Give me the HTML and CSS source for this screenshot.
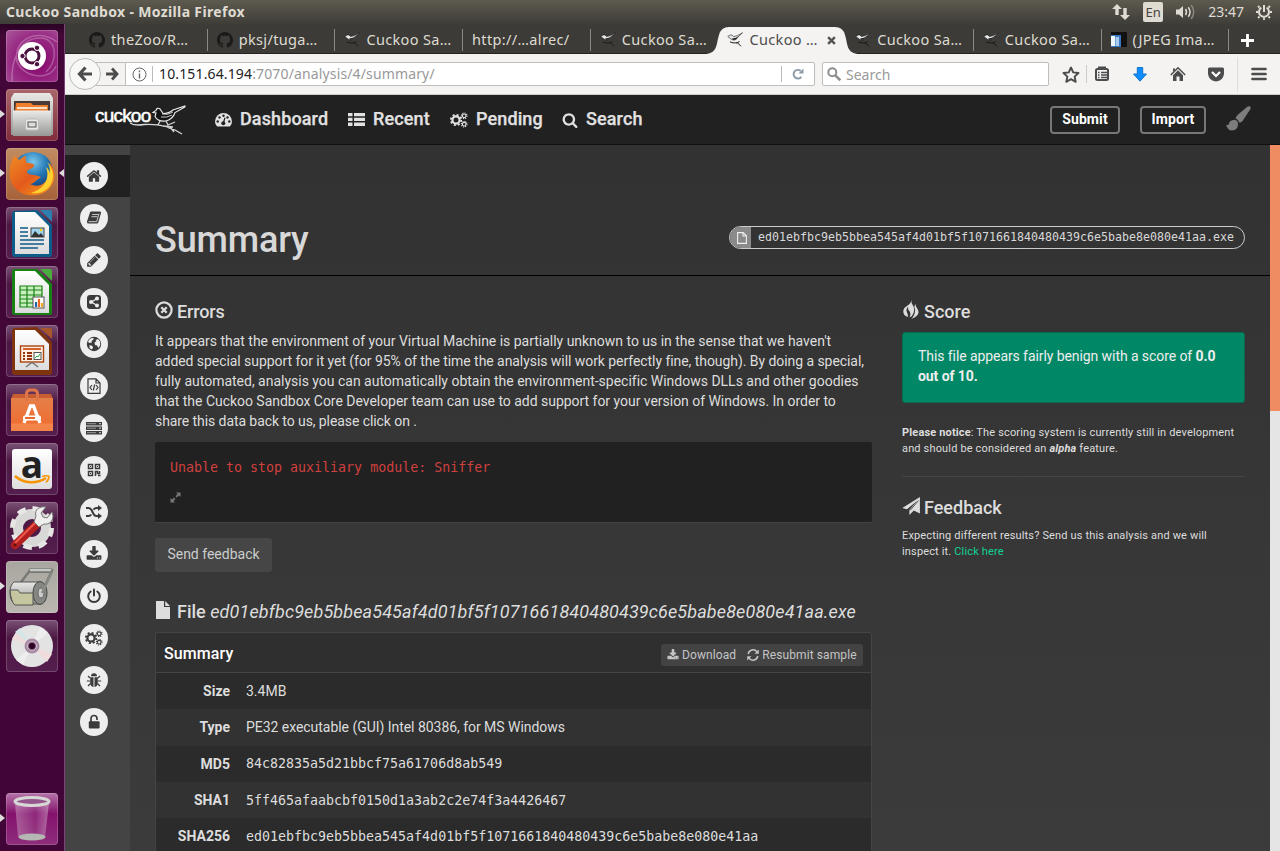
FILE: index.html
```html
<!DOCTYPE html>
<html lang="en">
<head>
<meta charset="utf-8">
<title>Cuckoo Sandbox - Mozilla Firefox</title>
<link rel="stylesheet" href="styles.css">
</head>
<body>
<svg class="defs" width="0" height="0">
  <defs>
    <linearGradient id="silver" x1="0" y1="0" x2="0" y2="1"><stop offset="0" stop-color="#e8e8e6"/><stop offset="1" stop-color="#979795"/></linearGradient>
    <linearGradient id="paper" x1="0" y1="0" x2="0" y2="1"><stop offset="0" stop-color="#fff"/><stop offset="1" stop-color="#dcdcdc"/></linearGradient>
    <linearGradient id="bag" x1="0" y1="0" x2="0" y2="1"><stop offset="0" stop-color="#e57f49"/><stop offset=".75" stop-color="#ee6f33"/><stop offset=".8" stop-color="#f5844b"/><stop offset="1" stop-color="#f08347"/></linearGradient>
    <linearGradient id="fox" x1="0" y1="0" x2="1" y2="1"><stop offset="0" stop-color="#f08a24"/><stop offset=".5" stop-color="#e35a1c"/><stop offset="1" stop-color="#f9a51e"/></linearGradient>
    <radialGradient id="globeblue" cx=".5" cy=".25" r=".7"><stop offset="0" stop-color="#7cc6ea"/><stop offset=".5" stop-color="#2478b5"/><stop offset="1" stop-color="#173a74"/></radialGradient>
    <linearGradient id="bin" x1="0" y1="0" x2="1" y2="0"><stop offset="0" stop-color="#fff" stop-opacity=".3"/><stop offset=".6" stop-color="#fff" stop-opacity=".08"/><stop offset="1" stop-color="#fff" stop-opacity=".35"/></linearGradient>
  </defs>
  <symbol id="i-home" viewBox="0 0 1792 1792"><path d="M1472 992v480q0 26-19 45t-45 19h-384v-384h-256v384h-384q-26 0-45-19t-19-45v-480q0-1 .5-3t.5-3l575-474 575 474q1 2 1 6zm223-69l-62 74q-8 9-21 11h-3q-13 0-21-7l-692-577-692 577q-12 8-24 7-13-2-21-11l-62-74q-8-10-7-23.5t11-21.5l719-599q32-26 76-26t76 26l244 204v-195q0-14 9-23t23-9h192q14 0 23 9t9 23v408l219 182q10 8 11 21.5t-7 23.5z"/></symbol>
  <symbol id="i-pencil" viewBox="0 0 1792 1792"><path d="M491 1536l91-91-235-235-91 91v107h128v128h107zm523-928q0-22-22-22-10 0-17 7l-542 542q-7 7-7 17 0 22 22 22 10 0 17-7l542-542q7-7 7-17zm-54-192l416 416-832 832h-416v-416zm683 96q0 53-37 90l-166 166-416-416 166-165q36-38 90-38 53 0 91 38l235 234q37 39 37 91z"/></symbol>
  <symbol id="i-download" viewBox="0 0 1792 1792"><path d="M1344 1344q0-26-19-45t-45-19-45 19-19 45 19 45 45 19 45-19 19-45zm256 0q0-26-19-45t-45-19-45 19-19 45 19 45 45 19 45-19 19-45zm128-224v320q0 40-28 68t-68 28h-1472q-40 0-68-28t-28-68v-320q0-40 28-68t68-28h465l135 136q58 56 136 56t136-56l136-136h464q40 0 68 28t28 68zm-325-569q17 41-14 70l-448 448q-18 19-45 19t-45-19l-448-448q-31-29-14-70 17-39 59-39h256v-448q0-26 19-45t45-19h256q26 0 45 19t19 45v448h256q42 0 59 39z"/></symbol>
  <symbol id="i-search" viewBox="0 0 1792 1792"><path d="M1216 832q0-185-131.5-316.5t-316.5-131.5-316.5 131.5-131.5 316.5 131.5 316.5 316.5 131.5 316.5-131.5 131.5-316.5zm512 832q0 52-38 90t-90 38q-54 0-90-38l-343-342q-179 124-399 124-143 0-273.5-55.5t-225-150-150-225-55.5-273.5 55.5-273.5 150-225 225-150 273.5-55.5 273.5 55.5 225 150 150 225 55.5 273.5q0 220-124 399l343 343q37 37 37 90z"/></symbol>
  <symbol id="i-plane" viewBox="0 0 18 18"><path d="M17.900 0V16.500L11.800 13.500 7.400 18V13L15.500 3.500 5 12.200.3 11z"/><path d="M8.300 13.300L16.500 3.500" stroke="#363636" stroke-width=".8"/></symbol>
  <symbol id="i-github" viewBox="0 0 16 16"><path d="M8 0C3.58 0 0 3.58 0 8c0 3.54 2.29 6.53 5.47 7.59.4.07.55-.17.55-.38 0-.19-.01-.82-.01-1.49-2.01.37-2.53-.49-2.69-.94-.09-.23-.48-.94-.82-1.13-.28-.15-.68-.52-.01-.53.63-.01 1.08.58 1.23.82.72 1.21 1.87.87 2.33.66.07-.52.28-.87.51-1.07-1.78-.2-3.64-.89-3.64-3.95 0-.87.31-1.59.82-2.15-.08-.2-.36-1.02.08-2.12 0 0 .67-.21 2.2.82.64-.18 1.32-.27 2-.27s1.36.09 2 .27c1.53-1.04 2.2-.82 2.2-.82.44 1.1.16 1.92.08 2.12.51.56.82 1.27.82 2.15 0 3.07-1.87 3.75-3.65 3.95.29.25.54.73.54 1.48 0 1.07-.01 1.93-.01 2.2 0 .21.15.46.55.38A8.01 8.01 0 0016 8c0-4.42-3.58-8-8-8z"/></symbol>
  <symbol id="i-cogs" viewBox="0 0 18 16">
    <g fill="none" stroke="currentColor"><circle cx="6" cy="8" r="3.6" stroke-width="2.2"/><circle cx="6" cy="8" r="5.2" stroke-width="1.8" stroke-dasharray="2.04"/>
    <circle cx="14.2" cy="3.800" r="1.800" stroke-width="1.100"/><circle cx="14.2" cy="3.800" r="2.800" stroke-width="1.100" stroke-dasharray="1.100"/>
    <circle cx="14.2" cy="12.200" r="1.800" stroke-width="1.100"/><circle cx="14.2" cy="12.200" r="2.800" stroke-width="1.100" stroke-dasharray="1.100"/></g></symbol>
  <symbol id="i-bird" viewBox="0 0 16 16"><path d="M.8 4.500L3.200 3 5 3l1.500 1.600 4-1L15.500.8 11 5C9.500 8 6.500 9 4 7z" fill="#e8e8e8" stroke="#1a1a1a" stroke-width=".6"/><path d="M5 6.500L9 5.700 11.500 4 9 7.400 6 8z" fill="#222"/><path d="M3 9.800c3 1.600 5 1 7.500 1l3.500 3.500M9.500 11l3-1.500" fill="none" stroke="#191919" stroke-width="1"/></symbol>
</svg>

<div class="desktop">
  <header class="menubar">
    <span class="win-title">Cuckoo Sandbox - Mozilla Firefox</span>
    <div class="indicators">
      <svg width="18" height="16" viewBox="0 0 18 16" fill="#dfdbd2"><path d="M5 0l5 5H6.700v6H3.300V5H0zM13 16l5-5h-3.300V4h-3.400v7H8z"/></svg>
      <span class="lang">En</span>
      <svg width="20" height="16" viewBox="0 0 20 16"><path d="M0 5.500h3L7 2v12L3 10.500H0z" fill="#dfdbd2"/><path d="M9.500 5q2 3 0 6M12.300 3.200q3.500 4.800 0 9.600" stroke="#dfdbd2" stroke-width="1.500" fill="none"/><path d="M15.200 1q5 7 0 14" stroke="#8b877e" stroke-width="1.500" fill="none"/></svg>
      <span class="clock">23:47</span>
      <svg width="16" height="16" viewBox="0 0 16 16" fill="none" stroke="#dfdbd2"><path d="M5.300 3.600a5 5 0 1 0 5.400 0" stroke-width="2"/><path d="M8 1v7" stroke-width="2"/><path d="M3.500 3.500L2 2m10.500 1.500L14 2M2.500 8H0m13.500 0H16M3.500 12.500L2 14m10.500-1.500L14 14M8 13.500V16" stroke-width="1.800"/></svg>
    </div>
  </header>

  <div class="workspace">
    <aside class="launcher">
      <div class="app ubuntu"><svg viewBox="0 0 52 52"><path d="M6 51C5 30 14 8 34 8c18 0 18 24 6 34M51 12C30-4 4 12 12 34M50 36C44 52 14 48 10 28" fill="none" stroke="#fff" stroke-opacity=".25" stroke-width="1.500"/><circle cx="26" cy="26" r="14" fill="#fff"/><circle cx="26" cy="26" r="7" fill="none" stroke="#4b1240" stroke-width="3"/><g fill="#4b1240" stroke="#fff"><circle cx="16.500" cy="26" r="2.700"/><circle cx="31" cy="17.800" r="2.700"/><circle cx="31" cy="34.200" r="2.700"/></g></svg></div>
      <div class="app files run"><svg viewBox="0 0 52 52"><path d="M8 4h36l3 5v37H5V9z" fill="url(#silver)"/><path d="M5 9h42v3H5z" fill="#dededc"/><path d="M8 12h36v11H8z" fill="#4a3a35"/><path d="M10 14h15l2 2h15v7H9z" fill="#f07f2e"/><path d="M11 18h30v2H11z" fill="#fbe1c9"/><path d="M7 22h38v25H7z" fill="url(#silver)"/><path d="M7 22h38" stroke="#eee"/><rect x="19.500" y="30" width="13" height="11" rx="2" fill="#e9e9e7" stroke="#bbb"/><rect x="22" y="33" width="8" height="5" fill="#ddd" stroke="#555"/></svg></div>
      <div class="app firefox run focus"><svg viewBox="0 0 52 52"><circle cx="27" cy="24" r="20" fill="url(#globeblue)"/><path d="M8 8c2 1 4 2 5 4 3-2 5-4 7-4-1 3 0 5 1 7 4 0 8 1 7 3-1 3-7 3-7 6 0 2 4 3 8 3l6 2c-4 2-7 7-11 7 6 3 12 2 16-3 5-5 6-13 3-19 6 6 8 17 2 24-7 12-28 12-36 2C1 31 3 18 8 8z" fill="url(#fox)"/><path d="M41 14c8 7 8 19 1 26-6 5-12 6-17 5 11-3 20-13 15-26 3 2 4 5 3 8 2-6 0-10-2-13z" fill="#fdd130"/></svg></div>
      <div class="app doc"><svg viewBox="0 0 52 52"><path d="M9 4q-3 0-3 3v40q0 3 3 3h35q2 0 2-2V18L31 3z" fill="#0e5c8a"/><path d="M34 3h10q2 0 2 2v10z" fill="#2f7fae"/><path d="M9 5h20l14 14v28H9z" fill="url(#paper)"/><path d="M14 21h8m-8 4h8m-8 4h8m-8 4h24m-24 4h24m-24 4h18" stroke="#0e5c8a" stroke-width="1.700"/><rect x="25" y="21" width="13" height="9" fill="#9fd4ee" stroke="#444"/><path d="M25 30l4-6 4 4 2-2 3 4z" fill="#333"/><circle cx="35" cy="23" r="1.300" fill="#fc0"/></svg></div>
      <div class="app doc"><svg viewBox="0 0 52 52"><path d="M9 3q-3 0-3 3v40q0 3 3 3h35q2 0 2-2V18L31 3z" fill="#188114"/><path d="M34 3h10q2 0 2 2v10z" fill="#4bab3c"/><path d="M9 5h20l14 14v28H9z" fill="url(#paper)"/><rect x="14" y="20" width="22" height="21" fill="#c7f0be"/><path d="M14 20h22v21H14zM14 24h22m-22 5h22m-22 4h22m-22 4h22M21 20v21m7-21v21" fill="none" stroke="#188114" stroke-width="1.200"/><rect x="27" y="31" width="11" height="11" fill="#fff" stroke="#555"/><path d="M30 41v-5" stroke="#26a" stroke-width="2.200"/><path d="M33 41v-8" stroke="#e62" stroke-width="2.200"/><path d="M36 41v-4" stroke="#ea2" stroke-width="2.200"/></svg></div>
      <div class="app doc"><svg viewBox="0 0 52 52"><path d="M9 3q-3 0-3 3v41q0 3 3 3h35q2 0 2-2V17L31 2z" fill="#7e340f"/><path d="M34 3h10q2 0 2 2v9z" fill="#a8572c"/><path d="M9 5h20l14 14v26H9z" fill="url(#paper)"/><rect x="14.500" y="21" width="23" height="16" fill="#fff0e2" stroke="#a8430b" stroke-width="1.400"/><path d="M17 24h18" stroke="#d8602a" stroke-width="2"/><path d="M17 28h2m-2 3h2m-2 3h2m2-6h5m-5 3h5m-5 3h5" stroke="#92330a" stroke-width="1.800"/><rect x="28" y="27.500" width="7" height="7" fill="#fff" stroke="#555"/><path d="M29 33l2-2 1 1 2-3" stroke="#2a3" fill="none"/><path d="M20 42l5-4h2l5 4" fill="none" stroke="#777" stroke-width="1.500"/></svg></div>
      <div class="app"><svg viewBox="0 0 52 52"><path d="M5 15l2-5h38l2 5v8H5z" fill="#c75e31"/><path d="M5 14h42v33H5z" fill="url(#bag)"/><path d="M20.500 17V10q0-4 4-4h3q4 0 4 4v7" fill="none" stroke="#df7449" stroke-width="3"/><path d="M18 39l6.500-17h3L34 39" fill="none" stroke="#fff" stroke-width="3.400"/><rect x="17" y="31.500" width="18" height="5" rx="2" fill="#fff"/><path d="M19 34h10" stroke="#e96a2d" stroke-width="2"/></svg></div>
      <div class="app amazon"><div class="amz"><span>a</span><svg viewBox="0 0 40 40"><path d="M3 27c9 8 22 8 31 2" fill="none" stroke="#f79400" stroke-width="2.400"/><path d="M30 27.500c3-1 7-1 7 0s-1 4-3 6" fill="none" stroke="#f79400" stroke-width="1.700"/></svg></div></div>
      <div class="app"><svg viewBox="0 0 52 52"><circle cx="26" cy="26" r="14" fill="none" stroke="#d8d8d6" stroke-width="10"/><circle cx="26" cy="26" r="19.500" fill="none" stroke="#e6e6e4" stroke-width="5" stroke-dasharray="8.500 6.800"/><path d="M9 43L31 22" stroke="#b31e1e" stroke-width="8" stroke-linecap="round"/><path d="M9 41L30 20" stroke="#ec5a4b" stroke-width="2"/><path d="M28 20l5 5 5-3c5 1 9-3 9-8l-1-4-5 6-4-1-2-4 5-6c-7-1-12 3-10 9z" fill="#efefed" stroke="#777"/><circle cx="9" cy="43" r="1.600" fill="#611"/></svg></div>
      <div class="app scanner run"><svg viewBox="0 0 52 52"><path d="M15 21L24 9.500H46L36 31" fill="none" stroke="#777974" stroke-width="2.400"/><path d="M25 9.500h19" stroke="#777974" stroke-width="5" stroke-linecap="round"/><path d="M25 9h19" stroke="#c5c7c2" stroke-width="2.500" stroke-linecap="round"/><path d="M8 21h27v22H9q-5-3-5-11t4-11z" fill="url(#silver)" stroke="#555"/><ellipse cx="34" cy="32" rx="7" ry="11.500" fill="#858783" stroke="#444"/><ellipse cx="35" cy="32" rx="3" ry="5" fill="#ccc" stroke="#666"/><path d="M4 29l8 0 2 3h13v12H9q-4-3-5-15z" fill="#c5c6a0" stroke="#555"/><path d="M36 32l10-21" stroke="#888a85" stroke-width="2.400"/></svg></div>
      <div class="app"><svg viewBox="0 0 52 52"><circle cx="26" cy="26" r="21" fill="#e3e3e3"/><path d="M26 26L6 19l5-8zM26 26l20 8-5 8z" fill="#f0dcdc"/><path d="M26 26l-9 19-7-5zM26 26l8-19 8 6z" fill="#eee"/><path d="M26 26L9 12l5-4z" fill="#d5e6e6"/><circle cx="26" cy="26" r="7.500" fill="#a98ba6"/><circle cx="26" cy="26" r="4.500" fill="#7c4a75" stroke="#ccc"/><circle cx="26" cy="26" r="3" fill="#2c0322"/></svg></div>
      <div class="app trash run"><svg viewBox="0 0 52 52"><path d="M9 10h34l-4 34q-13 5-27 0z" fill="url(#bin)"/><ellipse cx="26" cy="44" rx="13.500" ry="3.500" fill="#b5b8b2"/><ellipse cx="26" cy="8.500" rx="17" ry="4" fill="#94568b" stroke="#d7d8d5" stroke-width="3"/></svg></div>
    </aside>

    <section class="browser">
      <nav class="tabs">
        <div class="tab"><svg class="fav gh"><use href="#i-github"/></svg><span>theZoo/R…</span></div>
        <div class="tab"><svg class="fav gh"><use href="#i-github"/></svg><span>pksj/tuga…</span></div>
        <div class="tab"><svg class="fav"><use href="#i-bird"/></svg><span>Cuckoo Sa…</span></div>
        <div class="tab"><span>http://…alrec/</span></div>
        <div class="tab last"><svg class="fav"><use href="#i-bird"/></svg><span>Cuckoo Sa…</span></div>
        <div class="tab active"><svg class="tab-shape" viewBox="0 0 156 28"><path d="M0 28C14 28 12 18 15 9Q17 1 25 1H131Q139 1 141 9C144 18 142 28 156 28z" fill="#f4f3f2"/></svg><svg class="fav"><use href="#i-bird"/></svg><span>Cuckoo …</span><svg class="x" viewBox="0 0 8 8"><path d="M1 1l6 6M7 1L1 7" stroke="#555" stroke-width="2.200"/></svg></div>
        <div class="tab"><svg class="fav"><use href="#i-bird"/></svg><span>Cuckoo Sa…</span></div>
        <div class="tab"><svg class="fav"><use href="#i-bird"/></svg><span>Cuckoo Sa…</span></div>
        <div class="tab"><svg class="fav" viewBox="0 0 16 16"><path d="M0 0h16v15H0z" fill="#111"/><path d="M0 3h10v12H0z" fill="#3b78c4"/><path d="M0 4h4v10H0z" fill="#eef6fd"/><path d="M4.500 5H8v9H4.500z" fill="#a9cbee"/></svg><span>(JPEG Ima…</span></div>
        <svg class="plus" viewBox="0 0 12 12"><path d="M6 0v12M0 6h12" stroke="#fff" stroke-width="2.600"/></svg>
      </nav>

      <div class="toolbar">
        <button class="back"><svg width="16" height="16" viewBox="0 0 16 16" fill="none" stroke="#4c4c4c" stroke-width="3.200"><path d="M8.500 1.500L2.500 8l6 6.500M3 8h12"/></svg></button>
        <div class="urlbar">
          <span class="fwd"><svg width="13" height="14" viewBox="0 0 13 14" fill="none" stroke="#4c4c4c" stroke-width="2.800"><path d="M6 1.500L11 7l-5 5.500M11 7H0"/></svg></span>
          <svg class="info" width="15" height="15" viewBox="0 0 15 15"><circle cx="7.500" cy="7.500" r="6.500" fill="none" stroke="#666"/><path d="M7.500 6.500v5M7.500 3.500v1.700" stroke="#666" stroke-width="1.400"/></svg>
          <span class="url"><b>10.151.64.194</b>:7070/analysis/4/summary/</span>
          <span class="reload"><svg width="12" height="12" viewBox="0 0 12 12"><path d="M9.300 8.800A4.300 4.300 0 1 1 8.800 3" fill="none" stroke="#8b9aa8" stroke-width="1.900"/><path d="M6.500 5.500H11.500V.5z" fill="#8b9aa8"/></svg></span>
        </div>
        <div class="searchbar"><svg width="14" height="14" viewBox="0 0 14 14" fill="none" stroke="#8e8e8e"><circle cx="5.300" cy="5.300" r="4" stroke-width="2"/><path d="M8.300 8.300l5 5" stroke-width="2.600"/></svg><span>Search</span></div>
        <div class="tools">
          <svg width="18" height="17" viewBox="0 0 18 17"><path d="M9 1.500l2.200 4.900 5.300.6-3.900 3.600 1.100 5.200L9 13.200l-4.700 2.600 1.100-5.200L1.500 7l5.300-.6z" fill="none" stroke="#4c4c4c" stroke-width="1.900" stroke-linejoin="round"/></svg>
          <i class="sep"></i>
          <svg width="14" height="16" viewBox="0 0 14 16"><rect x="1" y="3" width="12" height="11" rx="1.500" fill="none" stroke="#4c4c4c" stroke-width="2"/><path d="M4 3V1.500h6V3" fill="none" stroke="#4c4c4c" stroke-width="2"/><path d="M3 6.500h1.500M6 6.500h6M3 9h1.500M6 9h6M3 11.500h1.500M6 11.500h6" stroke="#4c4c4c" stroke-width="1.500"/></svg>
          <svg width="14" height="15" viewBox="0 0 14 15"><path d="M4.300.5h5.400V7H13.500L7 14.200.5 7H4.300z" fill="#0f8dff" stroke="#1174cf"/></svg>
          <svg width="16" height="16" viewBox="0 0 16 16"><path d="M.8 9L8 1.800 15.200 9" fill="none" stroke="#4c4c4c" stroke-width="1.500"/><path d="M3 9.300l5-5 5 5V15H9.500v-4.500h-3V15H3z" fill="#4c4c4c"/><path d="M3 2.500h2V4L3 6z" fill="#4c4c4c"/></svg>
          <svg width="16" height="15" viewBox="0 0 16 15"><path d="M1.500.5h13q1.500 0 1.500 1.500v5q-1 7-8 7.500Q1 14 0 7V2Q0 .5 1.500.5z" fill="#4c4c4c"/><path d="M4 5l4 4 4-4" fill="none" stroke="#fff" stroke-width="2.200"/></svg>
          <i class="sep tall"></i>
          <svg width="16" height="14" viewBox="0 0 16 14"><path d="M1.500 2h13M1.500 7h13M1.500 12h13" stroke="#4c4c4c" stroke-width="2.700" stroke-linecap="round"/></svg>
        </div>
      </div>

      <header class="site-head">
        <div class="logo"><span>cuckoo</span><svg viewBox="0 0 56 30"><path d="M23 7.500L26 5.500Q27 2 30 4L33 8.500Q39 8.500 43 5L55 1Q55.500 2 53 3L45 7.500Q43 14 36 16 28 17 25 11.500L26 8z" fill="#141414" stroke="#eee" stroke-width="1.100"/><path d="M32 9q6 1.500 11-2M31 12q6 1 11-2" fill="none" stroke="#ddd" stroke-width=".9"/><path d="M0 18q5 3 14 1.500 13-.5 19 1.500l10 1M36 22l9 3 7 4M30 16l-2 4M36 16l2 4 7-3M40 22l4 5" fill="none" stroke="#d6d6d6" stroke-width="1.300"/></svg></div>
        <a class="n1"><svg width="17" height="14" viewBox="0 0 17 14"><path d="M1.800 13Q0 11 0 8.500a8.500 8.500 0 0 1 17 0Q17 11 15.200 13q-.5.500-1 .5H2.800q-.5 0-1-.5z" fill="currentColor"/><g fill="#222"><circle cx="2.700" cy="8.500" r="1.200"/><circle cx="4.500" cy="4.400" r="1.200"/><circle cx="8.500" cy="2.700" r="1.200"/><circle cx="12.500" cy="4.400" r="1.200"/><circle cx="14.300" cy="8.500" r="1.200"/><circle cx="8.300" cy="10.300" r="2"/></g><path d="M8.300 10.300L10 4.800" stroke="#222" stroke-width="1.200"/></svg><span>Dashboard</span></a>
        <a class="n2"><svg width="17" height="13" viewBox="0 0 17 13" fill="currentColor"><path d="M0 0h4.500v3.300H0zM6 0h11v3.300H6zM0 4.800h4.500v3.300H0zM6 4.800h11v3.300H6zM0 9.600h4.500V13H0zM6 9.600h11V13H6z"/></svg><span>Recent</span></a>
        <a class="n3"><svg width="18" height="16"><use href="#i-cogs"/></svg><span>Pending</span></a>
        <a class="n4"><svg width="16" height="16" fill="currentColor"><use href="#i-search"/></svg><span>Search</span></a>
        <div class="actions"><button class="submit">Submit</button><button class="import">Import</button><svg width="25" height="25" viewBox="0 0 25 25" fill="#7d7d7d"><path d="M23.800.3q1.500 1 .5 3L16.500 15Q15 17 13 16.500 12 13 9.500 12.500 10 10.500 11.500 9L21.300.8q1.300-1 2.500-.5zM8.500 13.800q3.500.5 3.500 4.200 0 6-6 6.500-4.500 0-6-6 1.500 1 2.500.2 1-4.700 6-4.900z"/></svg></div>
      </header>

      <div class="site-body">
        <nav class="side">
          <a class="on"><i><svg fill="currentColor"><use href="#i-home"/></svg></i></a>
          <a><i><svg viewBox="0 0 16 16"><path d="M5 1.500h9q1.500 0 1 1.500l-2.700 9.500q-.3 1-1.300 1H2.500q-1.500 0-1.500-1.500 0-1 .4-1.800L4 2.500q.3-1 1-1z" fill="currentColor"/><path d="M6.200 4.500H12M5.500 6.700h5.800M2.500 11.700h8.200L13 3.500" stroke="#eee" stroke-width=".8" fill="none"/></svg></i></a>
          <a><i><svg fill="currentColor"><use href="#i-pencil"/></svg></i></a>
          <a><i><svg viewBox="0 0 16 16"><rect x="1" y="1" width="14" height="14" rx="3" fill="currentColor"/><path d="M11 4.500L5.500 8l5.500 3.500" stroke="#eee" fill="none" stroke-width="1.300"/><g fill="#eee"><circle cx="11" cy="4.500" r="2"/><circle cx="5" cy="8" r="2"/><circle cx="11" cy="11.500" r="2"/></g></svg></i></a>
          <a><i><svg viewBox="0 0 16 16"><circle cx="8" cy="8" r="7.200" fill="currentColor"/><path d="M5 2.200L8 2 7 4 5.500 5 6 6.500 3.500 7 2 6Q2.500 3.500 5 2.200zM9.500 4l2.500-1 2 2.500.3 3.500L12.500 12 11 9.500 9 9 8.500 6.500 10.500 5zM3.500 9l3 1 .5 2-1.500 1.500L3.500 12z" fill="#eee"/></svg></i></a>
          <a><i><svg viewBox="0 0 16 16" fill="none" stroke="currentColor" stroke-width="1.200"><path d="M2 .8h8L14 5v10.300H2zM10 .8V5h4M6 7l-2 2.500L6 12M10 7l2 2.500-2 2.500M8.700 6.500l-1.400 6"/></svg></i></a>
          <a><i><svg viewBox="0 0 16 16" fill="currentColor"><path d="M0 2h16v3.500H0zM0 6.500h16V10H0zM0 11h16v3.500H0z"/><path d="M1 3.700h9M1 8.200h9M1 12.700h9" stroke="#999"/><path d="M13 3.700h2M13 8.200h2M13 12.700h2" stroke="#ddd"/></svg></i></a>
          <a><i><svg viewBox="0 0 16 16" fill="none" stroke="currentColor" stroke-width="1.500"><path d="M2.500 2.500h4v4h-4zM9.500 2.500h4v4h-4zM2.500 9.500h4v4h-4zM9.500 14V9.500h2v2h2V9M12 13.500h2.500"/><path d="M4 4.500h1M11 4.500h1M4 11.500h1" stroke-width="1"/></svg></i></a>
          <a><i><svg viewBox="0 0 16 16"><path d="M0 4h2.500q2 0 3.300 2.500L7.500 10q1 2 3 2H13M0 12h2.500q1.700 0 2.700-1.500M7.500 5.800Q8.700 4 10.500 4H13" fill="none" stroke="currentColor" stroke-width="2"/><path d="M12 1l4 3-4 3zM12 9l4 3-4 3z" fill="currentColor"/></svg></i></a>
          <a><i><svg fill="currentColor"><use href="#i-download"/></svg></i></a>
          <a><i><svg viewBox="0 0 16 16" fill="none" stroke="currentColor" stroke-width="2" stroke-linecap="round"><path d="M4.700 3.500a5.800 5.800 0 1 0 6.600 0M8 1.500v6"/></svg></i></a>
          <a><i><svg class="wide"><use href="#i-cogs"/></svg></i></a>
          <a><i><svg viewBox="0 0 16 16"><path d="M5 4.200a3 3 0 0 1 6 0zM4.200 5.200h3.300V15Q4.200 14.500 4.200 11zM8.500 5.200h3.300V11q0 3.500-3.300 4z" fill="currentColor"/><path d="M4 6L2 4M12 6l2-2M4 9H.8M12 9h3.200M4.500 11.500L2 14M11.500 11.500L14 14" stroke="currentColor" stroke-width="1.200"/></svg></i></a>
          <a><i><svg viewBox="0 0 16 16"><rect x="2.800" y="7.300" width="10.800" height="7.200" rx="1" fill="currentColor"/><path d="M5 8V4.500a3 3 0 0 1 6 0V6" fill="none" stroke="currentColor" stroke-width="1.700"/></svg></i></a>
        </nav>

        <main class="main">
          <div class="page-head"><h1>Summary</h1>
            <div class="pill"><span class="pill-ic"><svg width="10" height="12" viewBox="0 0 10 12" fill="none" stroke="#eee" stroke-width="1.100"><path d="M.6.600h5.600l3.200 3.200v7.600H.600zM6 .6V4h3.400"/></svg></span><code>ed01ebfbc9eb5bbea545af4d01bf5f1071661840480439c6e5babe8e080e41aa.exe</code></div>
          </div>
          <div class="cols">
            <section class="left">
              <h2><svg width="18" height="18" viewBox="0 0 18 18" fill="none" stroke="currentColor"><circle cx="9" cy="9" r="7.600" stroke-width="2.200"/><path d="M6.300 6.300l5.400 5.400M11.700 6.300l-5.400 5.400" stroke-width="2.300"/></svg><span class="errors">Errors</span></h2>
              <p class="intro"><span class="l1">It appears that the environment of your Virtual Machine is partially unknown to us in the sense that we haven't</span><br><span class="l2">added special support for it yet (for 95% of the time the analysis will work perfectly fine, though). By doing a special,</span><br><span class="l3">fully automated, analysis you can automatically obtain the environment-specific Windows DLLs and other goodies</span><br><span class="l4">that the Cuckoo Sandbox Core Developer team can use to add support for your version of Windows. In order to</span><br><span class="l5">share this data back to us, please click on .</span></p>
              <div class="err"><code>Unable to stop auxiliary module: Sniffer</code><svg width="11" height="11" viewBox="0 0 12 12" fill="#777"><path d="M6.500.5h5v5L9.800 3.800 7.500 6 6 4.500 8.200 2.200zM5.500 11.500h-5v-5l1.700 1.700L4.500 6 6 7.500 3.800 9.800z"/></svg></div>
              <button class="send">Send feedback</button>
              <h2 class="file"><svg width="16" height="18" viewBox="0 0 16 18" fill="currentColor"><path d="M1 0h8v6h6v12H1zM10.200 0L15 5h-4.800z"/></svg><span>File <em>ed01ebfbc9eb5bbea545af4d01bf5f1071661840480439c6e5babe8e080e41aa.exe</em></span></h2>
              <div class="panel">
                <div class="panel-head"><b>Summary</b><div class="btns"><a><svg width="12" height="12" fill="currentColor"><use href="#i-download"/></svg>Download</a><a><svg width="12" height="12" viewBox="0 0 12 12"><path d="M1.200 5A5 5 0 0 1 10 2.700M10.800 7A5 5 0 0 1 2 9.300" fill="none" stroke="currentColor" stroke-width="1.500"/><path d="M11.800.5v4.300H7.500zM.2 11.500V7.200h4.300z" fill="currentColor"/></svg>Resubmit sample</a></div></div>
                <div class="row"><b>Size</b><span>3.4MB</span></div>
                <div class="row"><b>Type</b><span class="type">PE32 executable (GUI) Intel 80386, for MS Windows</span></div>
                <div class="row"><b>MD5</b><code>84c82835a5d21bbcf75a61706d8ab549</code></div>
                <div class="row"><b>SHA1</b><code>5ff465afaabcbf0150d1a3ab2c2e74f3a4426467</code></div>
                <div class="row"><b>SHA256</b><code>ed01ebfbc9eb5bbea545af4d01bf5f1071661840480439c6e5babe8e080e41aa</code></div>
              </div>
            </section>
            <aside class="right">
              <h2><svg class="flame" width="17" height="19" viewBox="0 0 17 19" fill="currentColor"><path d="M8.300 0Q8 3 10 5.500 12 9 10.500 13 9.500 16.500 6.500 17.500 8.500 13.500 6 10.500 4.500 8.500 5.200 6.500 2.500 9.500 4 12.500 5.300 15 4.800 17 0 15.500 .3 10.500 1 7.500 4.500 5.500 8 3.500 8.300 0z"/><path d="M12.300 3.800Q12.300 6.500 14.500 9 17 13 13.500 16 11.500 18 8.300 18.800 10.500 17 11.600 13.800 13 10 11.300 6.800 11.800 5.500 12.300 3.800z"/></svg><span>Score</span></h2>
              <div class="score"><span>This file appears fairly benign with a score of <b>0.0</b></span><br><b>out of 10.</b></div>
              <p class="small"><b>Please notice</b>: The scoring system is currently still in development<br>and should be considered an <b><em>alpha</em></b> feature.</p>
              <hr>
              <h2 class="fb"><svg width="18" height="18" fill="currentColor"><use href="#i-plane"/></svg><span>Feedback</span></h2>
              <p class="small">Expecting different results? Send us this analysis and we will<br>inspect it. <a>Click here</a></p>
            </aside>
          </div>
        </main>
        <div class="scroll"><div class="thumb"></div></div>
      </div>
    </section>
  </div>
</div>
</body>
</html>
```
FILE: styles.css
```css
* { box-sizing: border-box; }
body { margin: 0; overflow: hidden; font-family: Roboto, sans-serif; color: #ddd; }
svg { display: block; flex: none; }
.defs { position: absolute; }
button { font-family: inherit; padding: 0; }
.desktop { width: 1280px; height: 851px; display: flex; flex-direction: column; overflow: hidden; }

.menubar { height: 24px; flex: none; display: flex; justify-content: space-between; align-items: center; padding: 0 8px 0 6px; background: linear-gradient(#5d5a4f, #3f3d38); font-family: "Noto Sans", sans-serif; color: #dfdbd2; }
.win-title { padding-bottom: 2px; font-weight: 700; font-size: 14px; letter-spacing: .35px; }
.indicators { display: flex; align-items: center; font-size: 14px; }
.lang { width: 20px; height: 20px; margin: 0 13px 0 13px; border-radius: 2px; background: #dfdbd2; color: #45433e; font-size: 13px; line-height: 20px; text-align: center; }
.clock { margin: -2px 12px 0 12px; }

.workspace { flex: 1; min-height: 0; display: flex; }
.launcher { width: 65px; flex: none; padding: 6px 0 6px 6px; display: flex; flex-direction: column; gap: 7px; background: linear-gradient(#2b0325, #430737 12px, #410637); border-right: 1px solid #7c4378; }
.app { position: relative; width: 52px; height: 52px; flex: none; border-radius: 4px; background: linear-gradient(#7a5275, #4b1743 35%, #551f4d); box-shadow: inset 0 0 0 1px rgba(255,255,255,.18); }
.app > svg { width: 52px; height: 52px; }
.ubuntu { background: radial-gradient(circle at 60% 60%, #8b1273 20%, #9a2d85 60%, #a85a9b); }
.files { background: linear-gradient(#a9686b, #812c3b); }
.firefox { background: linear-gradient(#c18c62, #a6623a); }
.scanner { background: linear-gradient(#a9a59f, #bab6b0); }
.trash { margin-top: auto; background: linear-gradient(#b675aa, #84126d 40%, #8e2e7b); }
.run::before { content: ""; position: absolute; left: -6px; top: 21px; border: 4px solid transparent; border-left: 5px solid #ddd; border-right: 0; }
.focus::after { content: ""; position: absolute; right: -6px; top: 21px; border: 4px solid transparent; border-right: 5px solid #ddd; border-left: 0; }
.amazon { padding: 6px; }
.amz { position: relative; width: 40px; height: 40px; border-radius: 3px; background: linear-gradient(#fff, #dedede); text-align: center; color: #222; font: 700 37px/29px "Open Sans", sans-serif; }
.amz svg { position: absolute; inset: 0; }

.browser { flex: 1; min-width: 0; display: flex; flex-direction: column; }
.tabs { height: 30px; flex: none; display: flex; padding-left: 15px; background: #3c3b37; border-bottom: 1px solid #24231f; font-family: "Noto Sans", sans-serif; color: #dfdbd2; }
.tab { position: relative; width: 127.700px; flex: none; display: flex; align-items: center; gap: 6px; padding: 3px 0 0 9px; white-space: nowrap; }
.tab:not(.active):not(.last)::after { content: ""; position: absolute; right: 0; top: 5px; height: 22px; border-right: 1px solid #8b8983; }
.tab span { position: relative; padding-bottom: 2px; font-size: 14.500px; letter-spacing: .35px; }
.fav { position: relative; width: 16px; height: 16px; }
.gh { fill: #1b1a18; }
.active { color: #4c4c4c; z-index: 1; }
.tab-shape { position: absolute; left: -14px; top: 2px; width: 156px; height: 28px; }
.x { position: relative; width: 9px; height: 9px; margin-left: 3px; }
.plus { width: 13px; height: 13px; margin: 10px 0 0 12px; }

.toolbar { height: 41px; flex: none; display: flex; align-items: center; padding-left: 4px; background: #f4f3f2; border-bottom: 1px solid #d0cecb; font-family: "Noto Sans", sans-serif; font-size: 14px; color: #999; }
.back { position: relative; z-index: 1; width: 32px; height: 32px; border: 1px solid #bbb; border-radius: 50%; background: #f8f8f7; display: grid; place-items: center; }
.urlbar { height: 24px; width: 721px; margin-left: -7px; border: 1px solid #c0beba; border-radius: 2px; background: #fff; display: flex; align-items: center; }
.fwd { width: 31px; height: 22px; padding-left: 5px; background: #f4f3f2; border-right: 1px solid #c0beba; display: grid; place-items: center; }
.info { margin-left: 6px; }
.url { margin-left: 5px; padding-left: 6px; border-left: 1px solid #bbb; line-height: 16px; letter-spacing: .14px; }
.url b { font-weight: 400; color: #222; }
.reload { margin-left: auto; width: 33px; height: 16px; border-left: 1px solid #bbb; display: grid; place-items: center; }
.searchbar { width: 227px; height: 24px; margin-left: 7px; border: 1px solid #c0beba; border-radius: 2px; background: #fff; display: flex; align-items: center; gap: 5px; padding-left: 4px; }
.tools { flex: 1; display: flex; align-items: center; padding-left: 13px; }
.tools .sep { width: 1px; height: 18px; margin: 0 8px 0 6px; background: #ccc; }
.tools svg:nth-of-type(3) { margin: 0 23px 0 24px; }
.tools svg:nth-of-type(5) { margin: 0 0 0 22px; }
.tools .sep.tall { height: 35px; margin: 0 13px 0 13px; background: #ddd; }

.site-head { height: 50px; flex: none; display: flex; align-items: center; padding: 0 29px 0 30px; background: #212121; border-bottom: 1px solid #101010; font-size: 18px; font-weight: 500; color: #e2e2e2; }
.site-head a { display: flex; align-items: center; gap: 8px; height: 24px; }
.site-head a span { padding-bottom: 2px; letter-spacing: .12px; -webkit-text-stroke: .25px currentColor; }
.logo { position: relative; width: 91px; height: 30px; margin-right: 29px; color: #fff; font: 400 19px/21px "Liberation Sans", sans-serif; letter-spacing: -.8px; -webkit-text-stroke: .5px #fff; }
.logo svg { position: absolute; left: 35px; top: 0; width: 56px; height: 30px; }
.n1 { width: 133px; } .n2 { width: 102px; } .n3 { width: 112px; }
.actions { margin-left: auto; display: flex; align-items: center; gap: 20px; }
.actions button { height: 28px; border: 2px solid #777; border-radius: 4px; background: none; color: #fff; font-weight: 700; font-size: 14px; line-height: 23px; letter-spacing: .1px; }
.actions svg { margin-top: -2px; }
.submit { width: 70px; } .import { width: 66px; }

.site-body { flex: 1; min-height: 0; display: flex; }
.side { width: 65px; flex: none; padding-top: 10px; background: #444; }
.side a { display: flex; align-items: center; height: 42px; padding-left: 15px; color: #3b3b3b; }
.side .on { background: #212121; }
.side i { width: 28px; height: 28px; border-radius: 50%; background: #eee; display: grid; place-items: center; }
.side svg { width: 16px; height: 16px; }
.side .wide { width: 18px; }

.main { flex: 1; min-width: 0; background: linear-gradient(#323232, #3b3b3b); }
.page-head { height: 131px; display: flex; justify-content: space-between; padding: 0 25px; border-bottom: 1px solid #000; }
h1 { margin: 73px 0 0; font-weight: 500; font-size: 36px; line-height: 44px; letter-spacing: -.15px; color: #d8d8d8; }
.pill { height: 23px; width: 516px; margin-top: 81px; display: flex; border: 1px solid #ccc; border-radius: 12px; overflow: hidden; }
.pill-ic { width: 21px; padding-left: 2px; background: #8a8a8a; display: grid; place-items: center; }
.pill code { padding-left: 7px; font: 11.640px/21px "DejaVu Sans Mono", monospace; color: #d8d8d8; }
.cols { display: flex; gap: 30px; padding: 25px 25px 0; }
.left { width: 717px; } .right { width: 343px; }
h2 { margin: 0; height: 22px; display: flex; gap: 4px; align-items: flex-start; font-weight: 500; font-size: 18px; line-height: 22px; color: #ddd; }
.errors { letter-spacing: -.15px; }
.flame { margin: -1px 0 0 1px; }
.intro { margin: 8px 0 11px; font-size: 14px; line-height: 20px; white-space: nowrap; }
.l1 { letter-spacing: -.02px; } .l2 { letter-spacing: -.058px; } .l3 { letter-spacing: -.01px; } .l4 { letter-spacing: -.03px; } .l5 { letter-spacing: -.08px; }
.err { height: 81px; padding: 16px 15px; border-radius: 2px; background: #212121; border-bottom: 1px solid #444; }
.err code { display: block; font: 13.300px/20px "DejaVu Sans Mono", monospace; color: #d0403f; margin-bottom: 14px; }
.send { display: block; width: 117px; height: 34px; margin: 15px 0 29px; padding-bottom: 2px; border: 0; border-radius: 3px; background: #464646; color: #ccc; font-size: 14px; }
.file { gap: 6px; white-space: nowrap; }
.file em { font-weight: 400; letter-spacing: .125px; }
.panel { margin-top: 9px; border: 1px solid #444; border-radius: 3px 3px 0 0; background: #2f2f2f; }
.panel-head { height: 40px; display: flex; align-items: center; justify-content: space-between; padding: 0 8px; border-bottom: 1px solid #444; color: #fff; font-size: 16px; letter-spacing: .1px; }
.panel-head b { padding-top: 2px; font-weight: 500; }
.btns { height: 22px; width: 202px; margin-top: 4px; padding: 0 6px; display: flex; gap: 11px; align-items: center; border-radius: 3px; background: #434343; color: #c4c4c4; font-size: 12px; white-space: nowrap; }
.btns a { display: flex; gap: 3px; align-items: center; }
.row { height: 36.300px; display: flex; align-items: center; background: #323232; font-size: 14px; }
.row:nth-child(even) { background: #2b2b2b; }
.row b { width: 74px; margin-right: 16px; text-align: right; }
.row code { font: 13.300px "DejaVu Sans Mono", monospace; }
.type { letter-spacing: -.04px; }
.score { height: 71px; margin: 9px 0 22px; padding: 13px 15px; border: 1px solid #046b51; border-radius: 3px; background: #008766; color: #eee; font-size: 14px; line-height: 20px; letter-spacing: -.08px; white-space: nowrap; }
.small { margin: 0; font-size: 11px; line-height: 16px; letter-spacing: .155px; white-space: nowrap; }
.small a { color: #12d193; }
hr { margin: 19px 0 20px; border: 0; border-top: 1px solid #444; }
.fb { margin-bottom: 9px; }
.scroll { width: 10px; background: #e5e5e5; }
.thumb { height: 266px; background: #f08c62; }
```
